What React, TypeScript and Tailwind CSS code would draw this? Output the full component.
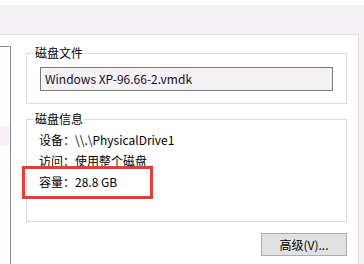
export default function App() {
  return (
    <div
      className="flex h-[264px] w-[364px] flex-col overflow-hidden bg-[#f5f1f5] text-[12px] text-black"
      style={{ fontFamily: '"Noto Sans CJK SC", "Noto Sans", sans-serif' }}
    >
      <div className="h-[5px] bg-white" />
      <div className="h-[29px]" />
      <div className="flex flex-1 w-[359px] border-t border-r border-[#dcdcdc] bg-white">
        {/* list on the left, mostly cut off */}
        <div className="mt-[11px] w-[11px] border-t border-r border-[#8a8a98]">
          <div className="mt-[79px] h-[19px] w-[9px] bg-[#f5f1f5]" />
        </div>

        <div className="ml-[15px] mt-[18px] flex w-[321px] flex-col">
          {/* 磁盘文件 */}
          <div className="relative h-[51px] border border-[#dcdcdc] px-[13px] pt-[13px]">
            <span className="absolute -top-[9px] left-[7px] bg-white px-[1px] leading-[16px]">
              磁盘文件
            </span>
            <div className="flex h-[24px] items-center border border-[#7a7a7a] bg-[#f5f1f5] px-[4px] text-[#101028]">
              Windows XP-96.66-2.vmdk
            </div>
          </div>

          {/* 磁盘信息 */}
          <div className="relative mt-[15px] h-[103px] border border-[#dcdcdc] pl-[12px] pt-[12px]">
            <span className="absolute -top-[9px] left-[7px] bg-white px-[1px] leading-[16px]">
              磁盘信息
            </span>
            <div className="flex flex-col gap-[5px] leading-[16px]">
              <div>设备：\\.\PhysicalDrive1</div>
              <div>访问：使用整个磁盘</div>
              <div>容量：28.8 GB</div>
            </div>
            <div className="absolute left-[-5px] top-[46px] h-[33px] w-[131px] border-[3px] border-[#ec3b3b]" />
          </div>

          <div className="mt-[11px] flex justify-end">
            <button className="h-[23px] w-[86px] border border-[#adadad] bg-[#e1e1e1] leading-[16px]">
              高级(V)...
            </button>
          </div>
        </div>
      </div>
    </div>
  );
}
